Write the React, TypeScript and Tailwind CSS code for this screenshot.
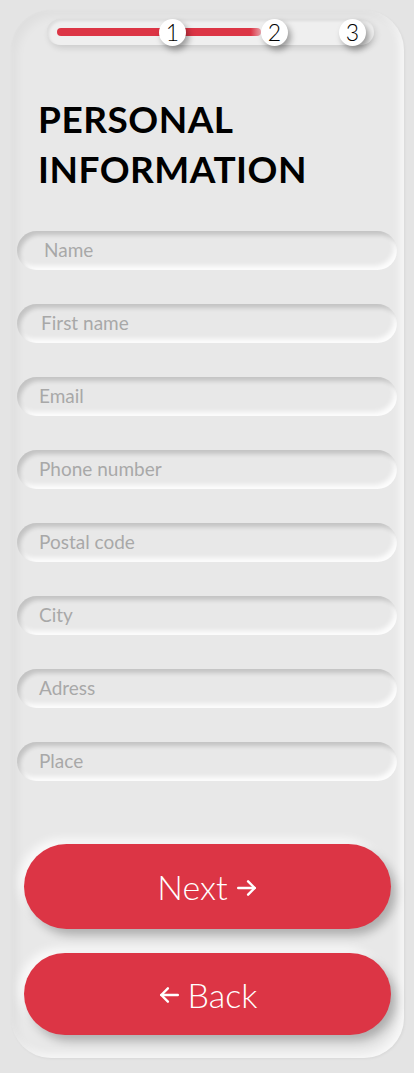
import React from "react";

const fields = [
  { label: "Name", pl: "pl-[27px]" },
  { label: "First name", pl: "pl-[24px]" },
  { label: "Email", pl: "pl-[22px]" },
  { label: "Phone number", pl: "pl-[22px]" },
  { label: "Postal code", pl: "pl-[22px]" },
  { label: "City", pl: "pl-[22px]" },
  { label: "Adress", pl: "pl-[22px]" },
  { label: "Place", pl: "pl-[22px]" },
];

function Dot({ n }: { n: string }) {
  return (
    <div className="w-[27px] h-[27px] rounded-full bg-white flex items-center justify-center text-[23px] font-light leading-none text-black shadow-[3px_4px_6px_rgba(0,0,0,0.35)]">
      {n}
    </div>
  );
}

function Arrow({ left }: { left?: boolean }) {
  return (
    <svg width="22" height="20" viewBox="0 0 20 18" fill="none" stroke="white" strokeWidth="2.2" strokeLinecap="round" strokeLinejoin="round">
      {left ? (
        <>
          <path d="M18 9H3" />
          <path d="M9 3L3 9L9 15" />
        </>
      ) : (
        <>
          <path d="M2 9H17" />
          <path d="M11 3L17 9L11 15" />
        </>
      )}
    </svg>
  );
}

export default function App() {
  return (
    <div
      className="min-h-[1073px] w-[414px] bg-[#e4e4e4] pt-[10px] pl-[11px]"
      style={{ fontFamily: "Lato, 'Noto Sans', sans-serif" }}
    >
      <div className="w-[393px] h-[1048px] rounded-[40px] bg-[#e8e8e8] shadow-[inset_6px_6px_10px_rgba(0,0,0,0.04),inset_-4px_-4px_8px_rgba(255,255,255,0.7),1px_1px_3px_rgba(0,0,0,0.05)] flex flex-col">
        {/* progress */}
        <div className="relative ml-[36px] mt-[9px] w-[327px] h-[26px] rounded-full bg-[#efefef] shadow-[inset_2px_2px_3px_rgba(0,0,0,0.08),2px_3px_6px_rgba(0,0,0,0.12)]">
          <div className="absolute left-[10px] top-[9px] w-[204px] h-[8px] rounded-full bg-[linear-gradient(90deg,#dc3545_0%,#dc3545_95%,#e8a0a8_100%)]" />
          <div className="absolute left-[112px] top-0">
            <Dot n="1" />
          </div>
          <div className="absolute left-[214px] top-0">
            <Dot n="2" />
          </div>
          <div className="absolute left-[292px] top-0">
            <Dot n="3" />
          </div>
        </div>

        <h1 className="mt-[49px] ml-[27px] text-[37px] leading-[50px] font-bold text-black tracking-[0.5px]">
          PERSONAL
          <br />
          INFORMATION
        </h1>

        <div className="mt-[37px] ml-[6px] flex flex-col gap-[34px]">
          {fields.map((f) => (
            <div
              key={f.label}
              className={`w-[380px] h-[39px] rounded-full bg-[#e8e8e8] flex items-center ${f.pl} text-[19px] text-[#a8a8a8] shadow-[inset_3px_4px_4px_rgba(0,0,0,0.16),inset_-3px_-4px_5px_rgba(255,255,255,0.9)]`}
            >
              {f.label}
            </div>
          ))}
        </div>

        <div className="mt-[63px] ml-[13px] flex flex-col gap-[24px]">
          <div className="w-[367px] h-[85px] rounded-full bg-[#dc3545] flex items-center justify-center text-white text-[34px] font-light shadow-[5px_6px_10px_rgba(0,0,0,0.25),-5px_-5px_10px_rgba(255,255,255,0.8)]">
            <span>Next</span>
            <span className="ml-[8px] mt-[2px]">
              <Arrow />
            </span>
          </div>
          <div className="w-[367px] h-[82px] rounded-full bg-[#dc3545] flex items-center justify-center text-white text-[34px] font-light shadow-[5px_6px_10px_rgba(0,0,0,0.25),-5px_-5px_10px_rgba(255,255,255,0.8)]">
            <span className="mr-[8px] mt-[2px]">
              <Arrow left />
            </span>
            <span>Back</span>
          </div>
        </div>
      </div>
    </div>
  );
}
